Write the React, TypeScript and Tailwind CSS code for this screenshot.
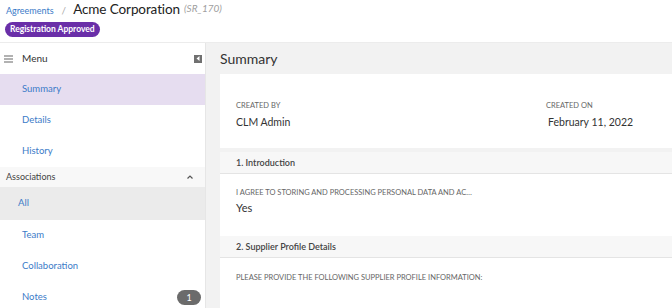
import { ReactNode } from 'react';

const FONT = { fontFamily: '"Lato", "Open Sans", sans-serif' };

const NavItem = ({
  label,
  active,
  badge
}: {
  label: string;
  active?: boolean;
  badge?: string;
}) => (
  <div
    className={`shrink-0 flex items-center justify-between h-[31px] pl-[22px] pr-[4px] text-[9.5px] text-[#3b7bc8] ${
      active ? 'bg-[#e6ddf0]' : 'bg-white'
    }`}
  >
    <span>{label}</span>
    {badge && (
      <span className="h-[15px] w-[24px] rounded-full bg-[#6b6b6b] text-white text-[9px] flex items-center justify-center">
        {badge}
      </span>
    )}
  </div>
);

const Section = ({ title, children }: { title: string; children: ReactNode }) => (
  <div className="shrink-0 bg-white">
    <div className="h-[22px] flex items-center px-[16px] bg-[#f7f7f7] border-b border-[#e4e4e4] text-[9px] font-semibold text-[#444]">
      {title}
    </div>
    {children}
  </div>
);

export default function App() {
  return (
    <div className="w-[672px] h-[308px] overflow-hidden bg-white flex flex-col" style={FONT}>
      <header className="h-[43px] shrink-0 px-[5px] pt-[3px] border-b border-[#ececec]">
        <div className="flex items-baseline leading-none h-[14px] pl-[1px]">
          <span className="text-[9px] text-[#3b7bc8]">Agreements</span>
          <span className="ml-[8px] text-[10px] text-[#aaa]">/</span>
          <span className="ml-[7px] text-[13.5px] text-[#222] tracking-[-0.1px]">Acme Corporation</span>
          <span className="ml-[4px] text-[10px] italic text-[#a0a0a0] relative -top-[2px]">(SR_170)</span>
        </div>
        <span className="mt-[5px] flex w-fit items-center h-[15px] px-[5px] rounded-full bg-[#6a2fa8] text-white text-[8.5px] font-bold leading-none">
          Registration Approved
        </span>
      </header>

      <div className="flex flex-1 min-h-0">
        <aside className="w-[206px] shrink-0 border-r border-[#e6e6e6] flex flex-col overflow-hidden">
          <div className="shrink-0 h-[31px] flex items-center justify-between pl-[4px] pr-[3px] text-[10px] text-[#333]">
            <div className="flex items-center gap-[9px]">
              <svg width="9" height="8" viewBox="0 0 9 8">
                <path d="M0 1h9M0 4h9M0 7h9" stroke="#666" strokeWidth="1.1" />
              </svg>
              <span>Menu</span>
            </div>
            <span className="w-[8px] h-[8px] bg-[#707070] flex items-center justify-center">
              <svg width="4" height="5" viewBox="0 0 4 5">
                <path d="M3.5 0L0.5 2.5L3.5 5Z" fill="#fff" />
              </svg>
            </span>
          </div>
          <NavItem label="Summary" active />
          <NavItem label="Details" />
          <NavItem label="History" />
          <div className="shrink-0 h-[20px] flex items-center justify-between pl-[6px] pr-[12px] bg-[#f8f8f8] text-[9px] text-[#444]">
            <span>Associations</span>
            <svg width="6" height="4" viewBox="0 0 6 4">
              <path d="M0.5 3.5L3 1L5.5 3.5" stroke="#555" strokeWidth="1.2" fill="none" />
            </svg>
          </div>
          <div className="shrink-0 h-[33px] flex items-center pl-[18px] bg-[#ebebeb] text-[9.5px] text-[#3b7bc8]">All</div>
          <NavItem label="Team" />
          <NavItem label="Collaboration" />
          <NavItem label="Notes" badge="1" />
        </aside>

        <main className="flex-1 bg-[#f2f2f2] pl-[14px] flex flex-col overflow-hidden">
          <h1 className="shrink-0 h-[31px] flex items-center text-[14px] text-[#333]">Summary</h1>
          <div className="shrink-0 bg-white h-[74px] flex pt-[26px]">
            <div className="pl-[16px] w-[326px]">
              <div className="text-[7.5px] text-[#666] uppercase">Created By</div>
              <div className="mt-[4px] text-[10.5px] text-[#333]">CLM Admin</div>
            </div>
            <div>
              <div className="text-[7.5px] text-[#666] uppercase">Created On</div>
              <div className="mt-[4px] ml-[2px] text-[10.5px] text-[#333]">February 11, 2022</div>
            </div>
          </div>
          <div className="shrink-0 h-[4px]" />
          <Section title="1. Introduction">
            <div className="h-[62px] px-[16px] pt-[13px]">
              <div className="text-[7.5px] text-[#666] uppercase">
                I agree to storing and processing personal data and ac…
              </div>
              <div className="mt-[2px] text-[11px] text-[#333]">Yes</div>
            </div>
          </Section>
          <Section title="2. Supplier Profile Details">
            <div className="h-[60px] px-[16px] pt-[14px]">
              <div className="text-[7.5px] text-[#666] uppercase">
                Please provide the following supplier profile information:
              </div>
            </div>
          </Section>
        </main>
      </div>
    </div>
  );
}
